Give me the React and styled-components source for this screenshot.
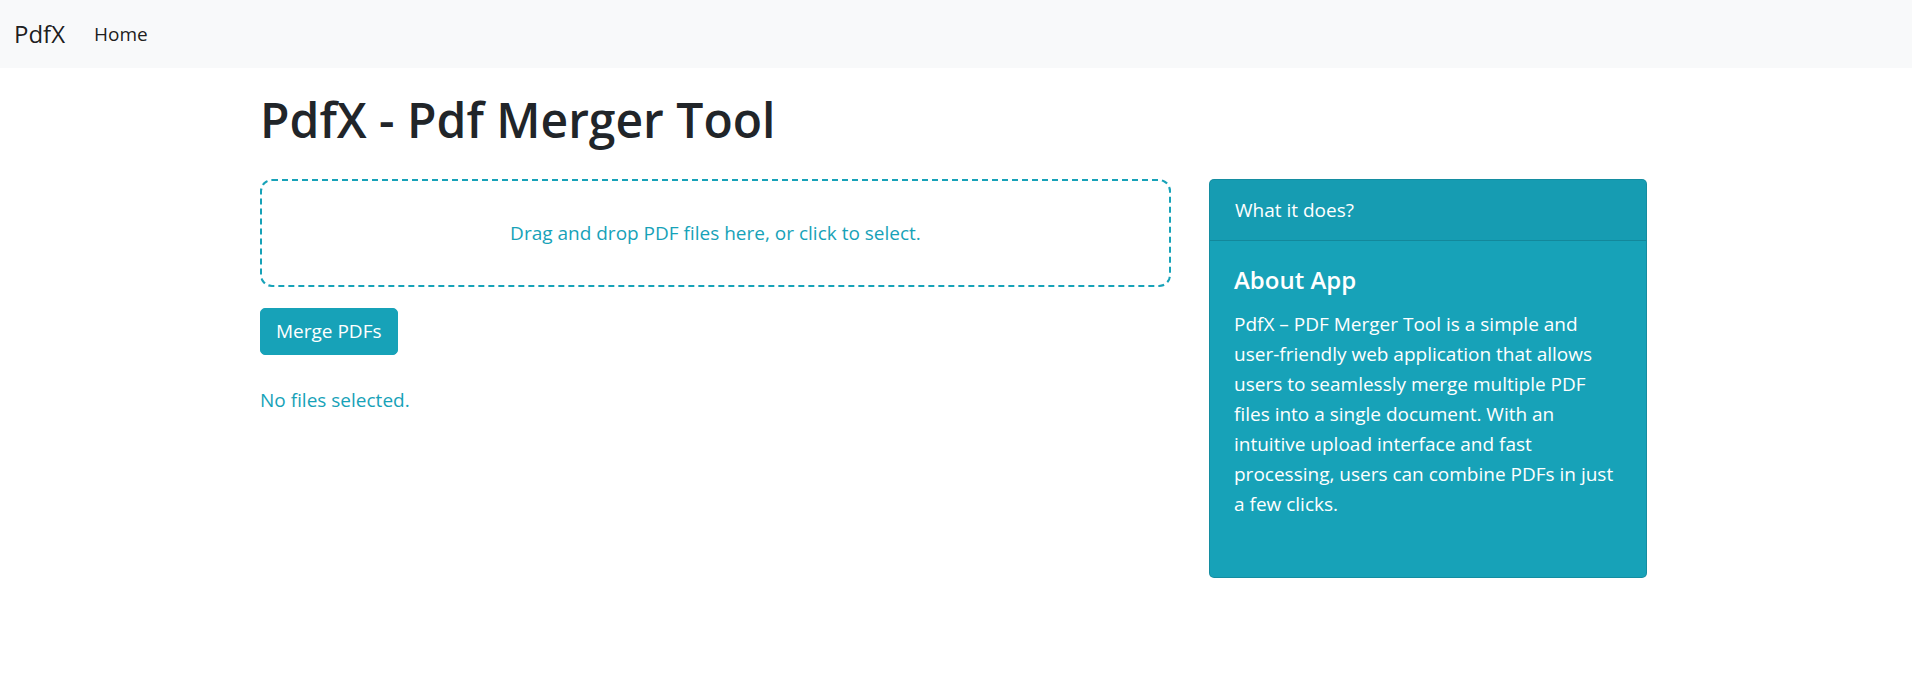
import React from "react";
import styled, { createGlobalStyle } from "styled-components";

const GlobalStyle = createGlobalStyle`
  html, body {
    margin: 0;
    padding: 0;
    background: #ffffff;
  }
  body {
    font-family: "Segoe UI", "Open Sans", "Noto Sans", sans-serif;
    font-size: 19px;
    line-height: 30px;
    color: #212529;
  }
  * { box-sizing: border-box; }
`;

const Navbar = styled.nav`
  height: 68px;
  background: #f8f9fa;
  display: flex;
  align-items: center;
  padding: 0 14px;
`;

const Brand = styled.a`
  font-size: 24px;
  color: rgba(0, 0, 0, 0.9);
  text-decoration: none;
  margin-right: 20px;
  line-height: 1.5;
`;

const NavLink = styled.a`
  font-size: 19px;
  color: rgba(0, 0, 0, 0.9);
  text-decoration: none;
  padding: 0 9px;
`;

const Container = styled.main`
  width: 1387px;
  margin-left: calc(50% - 696px);
`;

const Title = styled.h1`
  margin: 0 0 30px;
  padding-top: 23px;
  font-size: 48px;
  font-weight: 600;
  line-height: 1.2;
  color: #212529;
`;

const Row = styled.div`
  display: grid;
  grid-template-columns: 911px 438px;
  column-gap: 38px;
  align-items: start;
`;

const Column = styled.section`
  display: flex;
  flex-direction: column;
  align-items: flex-start;
`;

const DropZone = styled.div`
  width: 100%;
  height: 108px;
  border: 2px dashed #17a2b8;
  border-radius: 12px;
  display: flex;
  align-items: center;
  justify-content: center;
  color: #17a2b8;
  font-size: 19px;
  cursor: pointer;
`;

const Button = styled.button`
  margin-top: 21px;
  height: 47px;
  padding: 0 15px;
  border: 1px solid #17a2b8;
  border-radius: 5px;
  background: #17a2b8;
  color: #ffffff;
  font-family: inherit;
  font-size: 19px;
  line-height: 30px;
  cursor: pointer;
`;

const Status = styled.p`
  margin: 30px 0 0;
  color: #17a2b8;
  font-size: 19px;
`;

const Card = styled.aside`
  height: 399px;
  background: #17a2b8;
  color: #ffffff;
  border: 1px solid rgba(0, 0, 0, 0.125);
  border-radius: 5px;
  overflow: hidden;
  display: flex;
  flex-direction: column;
`;

const CardHeader = styled.div`
  padding: 15px 25px;
  background: rgba(0, 0, 0, 0.03);
  border-bottom: 1px solid rgba(0, 0, 0, 0.125);
  font-size: 19px;
  line-height: 30px;
`;

const CardBody = styled.div`
  padding: 25px 24px;
`;

const CardTitle = styled.h5`
  margin: 0 0 15px;
  font-size: 24px;
  font-weight: 600;
  line-height: 1.2;
`;

const CardText = styled.p`
  margin: 0;
  font-size: 19px;
  line-height: 30px;
  white-space: nowrap;
`;

export default function App() {
  return (
    <>
      <GlobalStyle />
      <Navbar>
        <Brand href="#">PdfX</Brand>
        <NavLink href="#">Home</NavLink>
      </Navbar>
      <Container>
        <Title>PdfX - Pdf Merger Tool</Title>
        <Row>
          <Column>
            <DropZone>Drag and drop PDF files here, or click to select.</DropZone>
            <Button>Merge PDFs</Button>
            <Status>No files selected.</Status>
          </Column>
          <Card>
            <CardHeader>What it does?</CardHeader>
            <CardBody>
              <CardTitle>About App</CardTitle>
              <CardText>
                PdfX – PDF Merger Tool is a simple and
                <br />
                user-friendly web application that allows
                <br />
                users to seamlessly merge multiple PDF
                <br />
                files into a single document. With an
                <br />
                intuitive upload interface and fast
                <br />
                processing, users can combine PDFs in just
                <br />
                a few clicks.
              </CardText>
            </CardBody>
          </Card>
        </Row>
      </Container>
    </>
  );
}
